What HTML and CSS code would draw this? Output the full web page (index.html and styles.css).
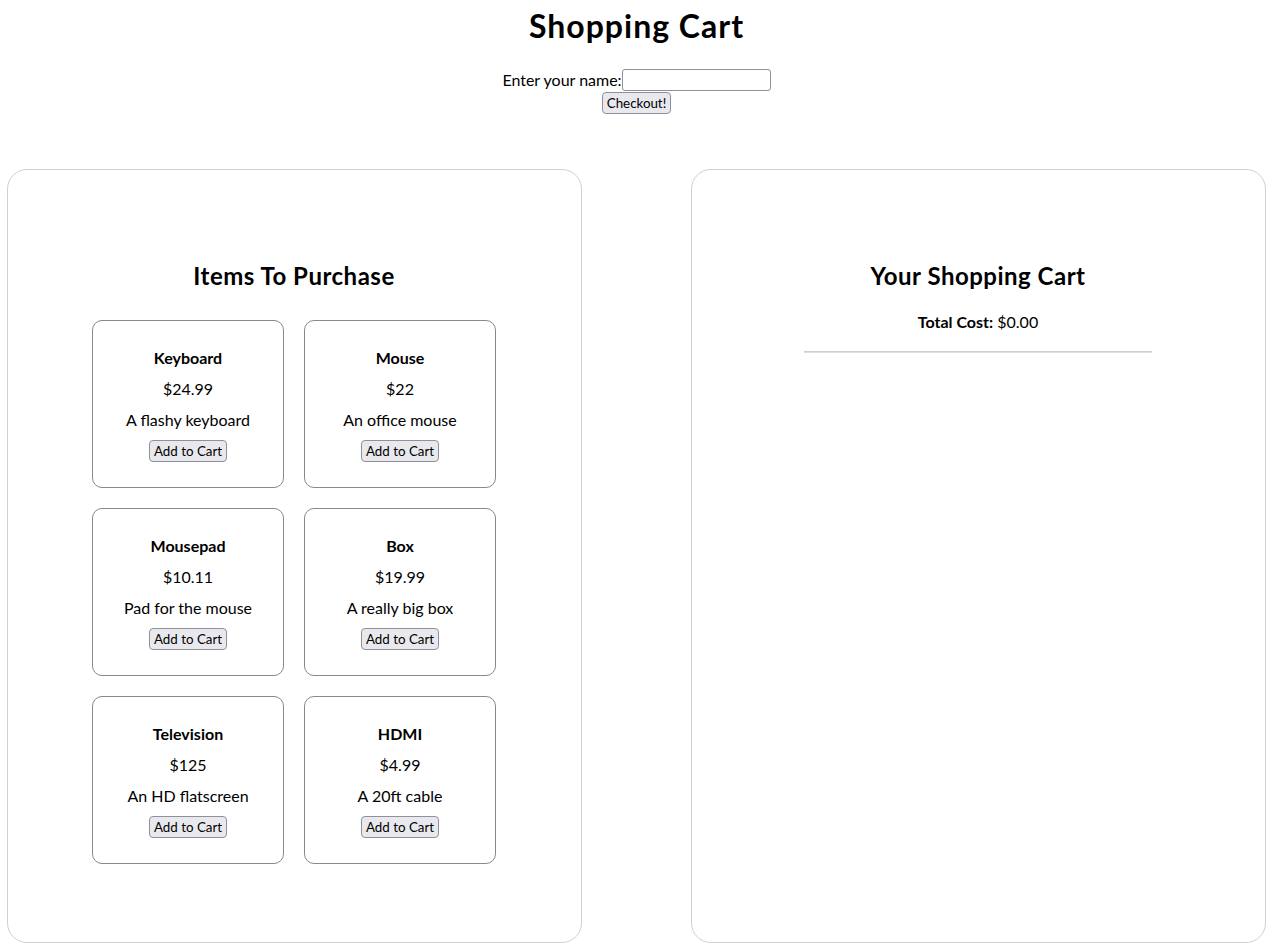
FILE: index.html
```html
<!DOCTYPE html>
<html lang="en">
<head>
<meta charset="utf-8">
<title>Shopping Cart</title>
<link rel="stylesheet" href="styles.css">
</head>
<body>
<div class="page">
  <header class="header">
    <h1 class="title">Shopping Cart</h1>
    <div class="name-row"><label class="name-label" for="name">Enter your name:</label><input class="name-input" id="name" type="text"></div>
    <div class="checkout-row"><button class="btn">Checkout!</button></div>
  </header>
  <main class="panels">
    <section class="panel">
      <h2 class="panel-title">Items To Purchase</h2>
      <div class="grid">
        <div class="card"><h4 class="card-name">Keyboard</h4><p class="card-line">$24.99</p><p class="card-line">A flashy keyboard</p><button class="btn">Add to Cart</button></div>
        <div class="card"><h4 class="card-name">Mouse</h4><p class="card-line">$22</p><p class="card-line">An office mouse</p><button class="btn">Add to Cart</button></div>
        <div class="card"><h4 class="card-name">Mousepad</h4><p class="card-line">$10.11</p><p class="card-line">Pad for the mouse</p><button class="btn">Add to Cart</button></div>
        <div class="card"><h4 class="card-name">Box</h4><p class="card-line">$19.99</p><p class="card-line">A really big box</p><button class="btn">Add to Cart</button></div>
        <div class="card"><h4 class="card-name">Television</h4><p class="card-line">$125</p><p class="card-line">An HD flatscreen</p><button class="btn">Add to Cart</button></div>
        <div class="card"><h4 class="card-name">HDMI</h4><p class="card-line">$4.99</p><p class="card-line">A 20ft cable</p><button class="btn">Add to Cart</button></div>
      </div>
    </section>
    <section class="panel">
      <h2 class="panel-title">Your Shopping Cart</h2>
      <p class="total"><strong>Total Cost:</strong> $0.00</p>
      <hr class="divider">
    </section>
  </main>
</div>
</body>
</html>
```
FILE: styles.css
```css
html, body {
  margin: 0;
  padding: 0;
  background: #ffffff;
}
body {
  font-family: Lato, "Noto Sans", sans-serif;
  font-size: 16px;
  color: #000;
}
.page {
  margin-left: 7px;
  width: 1259px;
}
.header {
  padding-top: 5px;
  text-align: center;
}
.title {
  margin: 0 0 22px;
  font-size: 32px;
  line-height: 42px;
  font-weight: 700;
  letter-spacing: 1px;
}
.name-row {
  height: 22px;
  display: flex;
  justify-content: center;
  align-items: center;
}
.name-label {
  font-size: 16px;
  line-height: 22px;
}
.name-input {
  box-sizing: border-box;
  width: 149px;
  height: 22px;
  margin: 0;
  border: 1px solid #8f8f9d;
  border-radius: 3px;
  padding: 1px 2px;
  background: #fff;
}
.checkout-row {
  height: 22px;
  margin-top: 1px;
  display: flex;
  justify-content: center;
}
.btn {
  box-sizing: border-box;
  height: 22px;
  margin: 0;
  padding: 0 4px;
  font-family: Lato, "Noto Sans", sans-serif;
  font-size: 13.33px;
  line-height: 20px;
  color: #000;
  background: #e9e9ed;
  border: 1px solid #8f8f9d;
  border-radius: 4px;
}
.panels {
  margin-top: 55px;
  display: flex;
  justify-content: space-between;
}
.panel {
  box-sizing: border-box;
  width: 575px;
  height: 774px;
  border: 1px solid #d0d0d0;
  border-radius: 20px;
  padding-top: 90px;
  padding-right: 1px;
  display: flex;
  flex-direction: column;
  align-items: center;
}
.panel-title {
  margin: 0;
  font-size: 24px;
  line-height: 32px;
  font-weight: 700;
  letter-spacing: 0.5px;
}
.grid {
  margin-top: 28px;
  display: grid;
  grid-template-columns: 192px 192px;
  gap: 20px;
}
.card {
  box-sizing: border-box;
  height: 168px;
  border: 1px solid #888;
  border-radius: 10px;
  padding-top: 26px;
  display: flex;
  flex-direction: column;
  align-items: center;
}
.card-name {
  margin: 0 0 10px;
  font-size: 16px;
  line-height: 21px;
  font-weight: 700;
}
.card-line {
  margin: 0 0 10px;
  line-height: 21px;
}
.total {
  margin: 19px 0 0;
  line-height: 21px;
}
.divider {
  box-sizing: border-box;
  width: 348px;
  height: 2px;
  margin: 19px 0 0;
  border: 0;
  border-top: 1px solid #cfcfcf;
  border-bottom: 1px solid #e0e0e0;
}
```
